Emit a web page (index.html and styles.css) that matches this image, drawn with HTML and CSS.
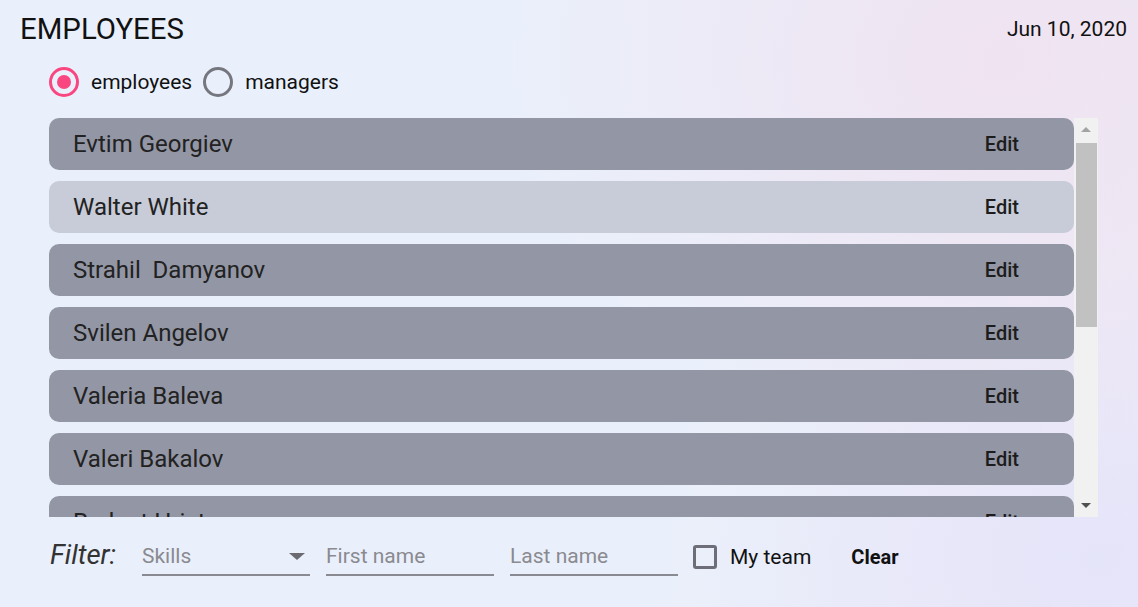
FILE: index.html
```html
<!DOCTYPE html>
<html>
<head>
<meta charset="utf-8">
<link rel="stylesheet" href="styles.css">
</head>
<body>
<div class="page">
  <header class="header">
    <h1 class="title">EMPLOYEES</h1>
    <div class="date">Jun 10, 2020</div>
  </header>
  <div class="radios">
    <label class="radio checked"><span class="ring"><span class="dot"></span></span>employees</label>
    <label class="radio"><span class="ring"></span>managers</label>
  </div>
  <div class="listwrap">
    <div class="list">
      <div class="row"><span class="name">Evtim Georgiev</span><span class="edit">Edit</span></div>
      <div class="row hover"><span class="name">Walter White</span><span class="edit">Edit</span></div>
      <div class="row"><span class="name">Strahil&nbsp; Damyanov</span><span class="edit">Edit</span></div>
      <div class="row"><span class="name">Svilen Angelov</span><span class="edit">Edit</span></div>
      <div class="row"><span class="name">Valeria Baleva</span><span class="edit">Edit</span></div>
      <div class="row"><span class="name">Valeri Bakalov</span><span class="edit">Edit</span></div>
      <div class="row"><span class="name">Radost Hristova</span><span class="edit">Edit</span></div>
      <div class="row"><span class="name">Ivan Petrov</span><span class="edit">Edit</span></div>
    </div>
    <div class="scrollbar">
      <div class="sb-btn"><span class="tri up"></span></div>
      <div class="sb-track"><div class="sb-thumb"></div></div>
      <div class="sb-btn"><span class="tri down"></span></div>
    </div>
  </div>
  <div class="filter">
    <span class="filter-label">Filter:</span>
    <div class="field select"><span class="ph">Skills</span><span class="caret"></span></div>
    <div class="field"><span class="ph">First name</span></div>
    <div class="field"><span class="ph">Last name</span></div>
    <label class="check"><span class="box"></span>My team</label>
    <span class="clear">Clear</span>
  </div>
</div>
</body>
</html>
```

FILE: styles.css
```css
html, body {
  margin: 0;
  height: 100%;
}
body {
  font-family: Roboto, "Liberation Sans", sans-serif;
  color: #111;
  background:
    radial-gradient(ellipse 500px 400px at 1000px 60px, rgba(240, 226, 240, 0.9), rgba(240, 226, 240, 0) 100%),
    radial-gradient(ellipse 400px 300px at 1100px 560px, rgba(228, 228, 250, 0.9), rgba(228, 228, 250, 0) 100%),
    linear-gradient(100deg, #e9f0fb 0%, #eaf0fb 60%, #ede9f6 100%);
  overflow: hidden;
}
.page {
  width: 1138px;
  height: 607px;
  box-sizing: border-box;
  padding: 13px 11px 0 20px;
}
.header {
  display: flex;
  justify-content: space-between;
  align-items: flex-start;
  height: 54px;
}
.title {
  margin: 0;
  font-size: 29.4px;
  font-weight: 400;
  line-height: 32px;
  letter-spacing: 0;
}
.date {
  font-size: 21px;
  line-height: 32px;
}
.radios {
  display: flex;
  align-items: center;
  gap: 11px;
  padding-left: 29px;
  height: 30px;
}
.radio {
  display: flex;
  align-items: center;
  gap: 12px;
  font-size: 21px;
}
.ring {
  width: 30px;
  height: 30px;
  box-sizing: border-box;
  border: 3px solid #76767e;
  border-radius: 50%;
  display: flex;
  align-items: center;
  justify-content: center;
}
.radio.checked .ring {
  border-color: #fa4680;
}
.dot {
  width: 14px;
  height: 14px;
  border-radius: 50%;
  background: #fa4680;
}
.listwrap {
  margin-top: 21px;
  margin-left: 29px;
  width: 1049px;
  height: 399px;
  display: flex;
}
.list {
  width: 1025px;
  overflow: hidden;
  display: flex;
  flex-direction: column;
  gap: 11px;
}
.row {
  flex: 0 0 52px;
  border-radius: 10px;
  background: #9396a4;
  display: flex;
  align-items: center;
  justify-content: space-between;
  padding: 0 55px 0 24px;
}
.row.hover {
  background: #c7ccd8;
}
.name {
  font-size: 24px;
  color: #222;
}
.edit {
  font-size: 20px;
  font-weight: 500;
  color: #1c1c1c;
}
.scrollbar {
  width: 24px;
  background: #f1f1f1;
  display: flex;
  flex-direction: column;
}
.sb-btn {
  height: 25px;
  display: flex;
  align-items: center;
  justify-content: center;
}
.sb-track {
  flex: 1;
  padding: 0 1px 0 2px;
}
.sb-thumb {
  height: 184px;
  background: #c1c1c1;
}
.tri {
  width: 0;
  height: 0;
  border-left: 5px solid transparent;
  border-right: 5px solid transparent;
}
.tri.up {
  border-bottom: 5px solid #a3a3a3;
  margin-top: -2px;
}
.tri.down {
  border-top: 5px solid #505050;
  margin-top: 2px;
}
.filter {
  display: flex;
  align-items: center;
  padding-left: 30px;
  margin-top: 20px;
  height: 40px;
}
.filter-label {
  font-style: italic;
  font-size: 27.5px;
  color: #333;
  width: 92px;
  margin-top: -5px;
}
.field {
  width: 168px;
  height: 38px;
  box-sizing: border-box;
  border-bottom: 2px solid #8a8a92;
  display: flex;
  align-items: center;
  justify-content: space-between;
  margin-right: 16px;
}
.ph {
  font-size: 21px;
  color: #8a8a90;
}
.caret {
  width: 0;
  height: 0;
  border-left: 8px solid transparent;
  border-right: 8px solid transparent;
  border-top: 7px solid #6a6a70;
  margin-right: 5px;
}
.check {
  display: flex;
  align-items: center;
  gap: 13px;
  font-size: 21px;
  color: #111;
  margin-left: -1px;
}
.box {
  width: 24px;
  height: 24px;
  box-sizing: border-box;
  border: 3px solid #6d6e78;
  border-radius: 3px;
}
.clear {
  font-size: 20px;
  font-weight: 700;
  margin-left: 40px;
}
```
